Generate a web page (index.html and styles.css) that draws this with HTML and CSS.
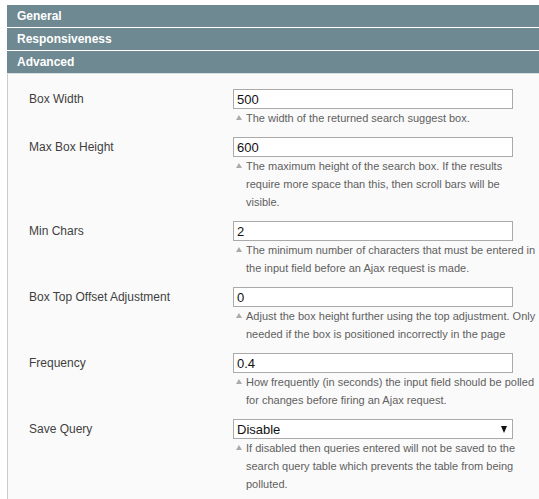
FILE: index.html
```html
<!DOCTYPE html>
<html>
<head>
<meta charset="utf-8">
<link rel="stylesheet" href="styles.css">
</head>
<body>
<div class="config">
  <div class="section-head">General</div>
  <div class="section-head">Responsiveness</div>
  <div class="section-head open">Advanced</div>
  <div class="panel">
    <div class="row">
      <label class="label">Box Width</label>
      <div class="value">
        <input class="text" type="text" value="500">
        <p class="note">The width of the returned search suggest box.</p>
      </div>
    </div>
    <div class="row">
      <label class="label">Max Box Height</label>
      <div class="value">
        <input class="text" type="text" value="600">
        <p class="note">The maximum height of the search box. If the results require more space than this, then scroll bars will be<br>visible.</p>
      </div>
    </div>
    <div class="row">
      <label class="label">Min Chars</label>
      <div class="value">
        <input class="text" type="text" value="2">
        <p class="note">The minimum number of characters that must be entered in the input field before an Ajax request is made.</p>
      </div>
    </div>
    <div class="row">
      <label class="label">Box Top Offset Adjustment</label>
      <div class="value">
        <input class="text" type="text" value="0">
        <p class="note">Adjust the box height further using the top adjustment. Only needed if the box is positioned incorrectly in the page</p>
      </div>
    </div>
    <div class="row">
      <label class="label">Frequency</label>
      <div class="value">
        <input class="text" type="text" value="0.4">
        <p class="note">How frequently (in seconds) the input field should be polled for changes before firing an Ajax request.</p>
      </div>
    </div>
    <div class="row">
      <label class="label">Save Query</label>
      <div class="value">
        <div class="select-wrap">
          <select class="select">
            <option>Disable</option>
            <option>Enable</option>
          </select>
        </div>
        <p class="note">If disabled then queries entered will not be saved to the search query table which prevents the table from being polluted.</p>
      </div>
    </div>
  </div>
</div>
</body>
</html>
```
FILE: styles.css
```css
html, body {
  margin: 0;
  padding: 0;
  background: #ffffff;
  overflow: hidden;
}
body {
  font-family: "Liberation Sans", Arial, sans-serif;
  width: 539px;
  height: 499px;
}
.config {
  margin: 5px -20px 0 7px;
}
.section-head {
  height: 22px;
  line-height: 22px;
  background: #6f8992;
  color: #ffffff;
  font-weight: bold;
  font-size: 12px;
  padding-left: 10px;
  margin-bottom: 1px;
}
.section-head.open {
  margin-bottom: 0;
  border-bottom: 1px solid #d6e0e4;
}
.panel {
  background: #fafafa;
  border-left: 1px solid #cccccc;
  padding: 15px 0 40px 21px;
  min-height: 500px;
}
.row {
  display: grid;
  grid-template-columns: 204px 1fr;
  margin-bottom: 10px;
}
.label {
  font-size: 12px;
  line-height: 20px;
  color: #3f3f3f;
}
.value {
  display: flex;
  flex-direction: column;
}
.text, .select-wrap {
  box-sizing: border-box;
  width: 280px;
  height: 20px;
  border: 1px solid #aaaaaa;
  background: #ffffff;
  margin: 0;
  padding: 0 3px;
  font-family: "Liberation Sans", Arial, sans-serif;
  font-size: 13px;
  color: #111111;
  outline: none;
}
.select-wrap {
  position: relative;
  padding: 0;
}
.select {
  appearance: none;
  -webkit-appearance: none;
  border: 0;
  background: transparent;
  width: 100%;
  height: 18px;
  padding: 0 3px;
  font-family: "Liberation Sans", Arial, sans-serif;
  font-size: 13px;
  color: #111111;
  outline: none;
}
.select-wrap::after {
  content: "";
  position: absolute;
  right: 5px;
  top: 6px;
  border-left: 3.5px solid transparent;
  border-right: 3.5px solid transparent;
  border-top: 7px solid #111111;
}
.note {
  position: relative;
  margin: 0;
  padding-left: 13px;
  width: 292px;
  font-size: 11px;
  line-height: 18px;
  color: #5f5f5f;
}
.note::before {
  content: "";
  position: absolute;
  left: 3px;
  top: 6px;
  border-left: 3px solid transparent;
  border-right: 3px solid transparent;
  border-bottom: 5px solid #aaaaaa;
}
```
